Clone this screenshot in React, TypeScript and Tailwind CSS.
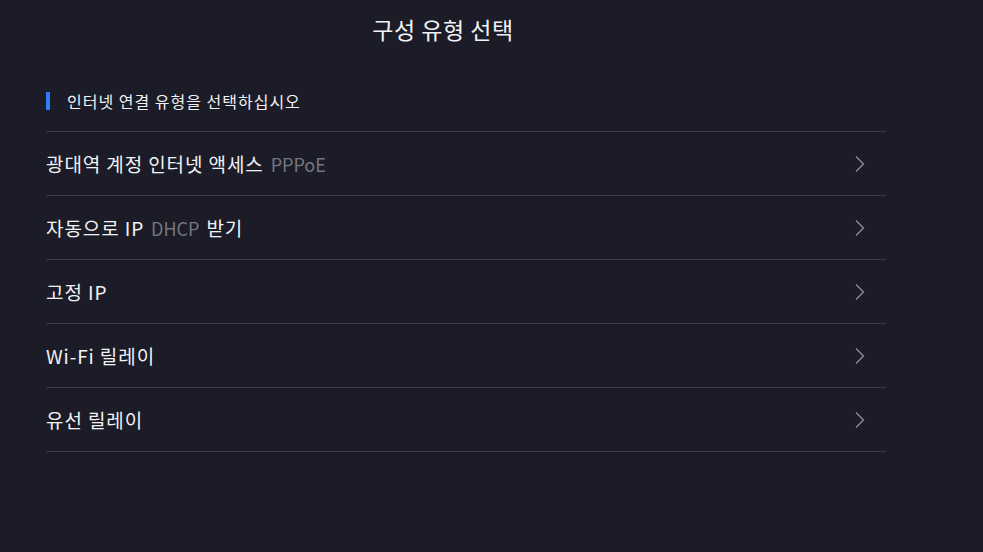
import React from "react";

const rows: { main: string; sub?: string; after?: string }[] = [
  { main: "광대역 계정 인터넷 액세스", sub: "PPPoE" },
  { main: "자동으로 IP", sub: "DHCP", after: "받기" },
  { main: "고정 IP" },
  { main: "Wi-Fi 릴레이" },
  { main: "유선 릴레이" },
];

function Chevron() {
  return (
    <svg width="12" height="18" viewBox="0 0 12 18" fill="none">
      <path d="M2 1.5 L9.5 9 L2 16.5" stroke="#8a8b93" strokeWidth="1.4" />
    </svg>
  );
}

export default function App() {
  return (
    <div
      className="w-full h-[552px] bg-[#1b1c27] text-[#f2f2f4] overflow-hidden"
      style={{ fontFamily: '"Noto Sans CJK KR", "Noto Sans", sans-serif' }}
    >
      <div className="w-[886px]">
        <div className="pt-[13px] h-[48px] text-center text-[23px] leading-[32px] tracking-[0.5px]">
          구성 유형 선택
        </div>
        <div className="pl-[46px]">
          <div className="flex items-center h-[83px] pt-[22px]">
            <div className="w-[4px] h-[18px] bg-[#2f7df5]" />
            <div className="ml-[17px] text-[16px] leading-[20px] tracking-[1px]">
              인터넷 연결 유형을 선택하십시오
            </div>
          </div>
          {rows.map((r) => (
            <div
              key={r.main}
              className="flex items-center justify-between h-[64px] border-t border-[#3a3b46]"
            >
              <div className="text-[19px] leading-[24px] flex items-baseline gap-[7px]">
                <span className="tracking-[0.9px]">{r.main}</span>
                {r.sub && <span className="text-[18px] text-[#75767e]">{r.sub}</span>}
                {r.after && <span className="tracking-[0.9px]">{r.after}</span>}
              </div>
              <div className="mr-[20px] flex items-center">
                <Chevron />
              </div>
            </div>
          ))}
          <div className="border-t border-[#3a3b46]" />
        </div>
      </div>
    </div>
  );
}
